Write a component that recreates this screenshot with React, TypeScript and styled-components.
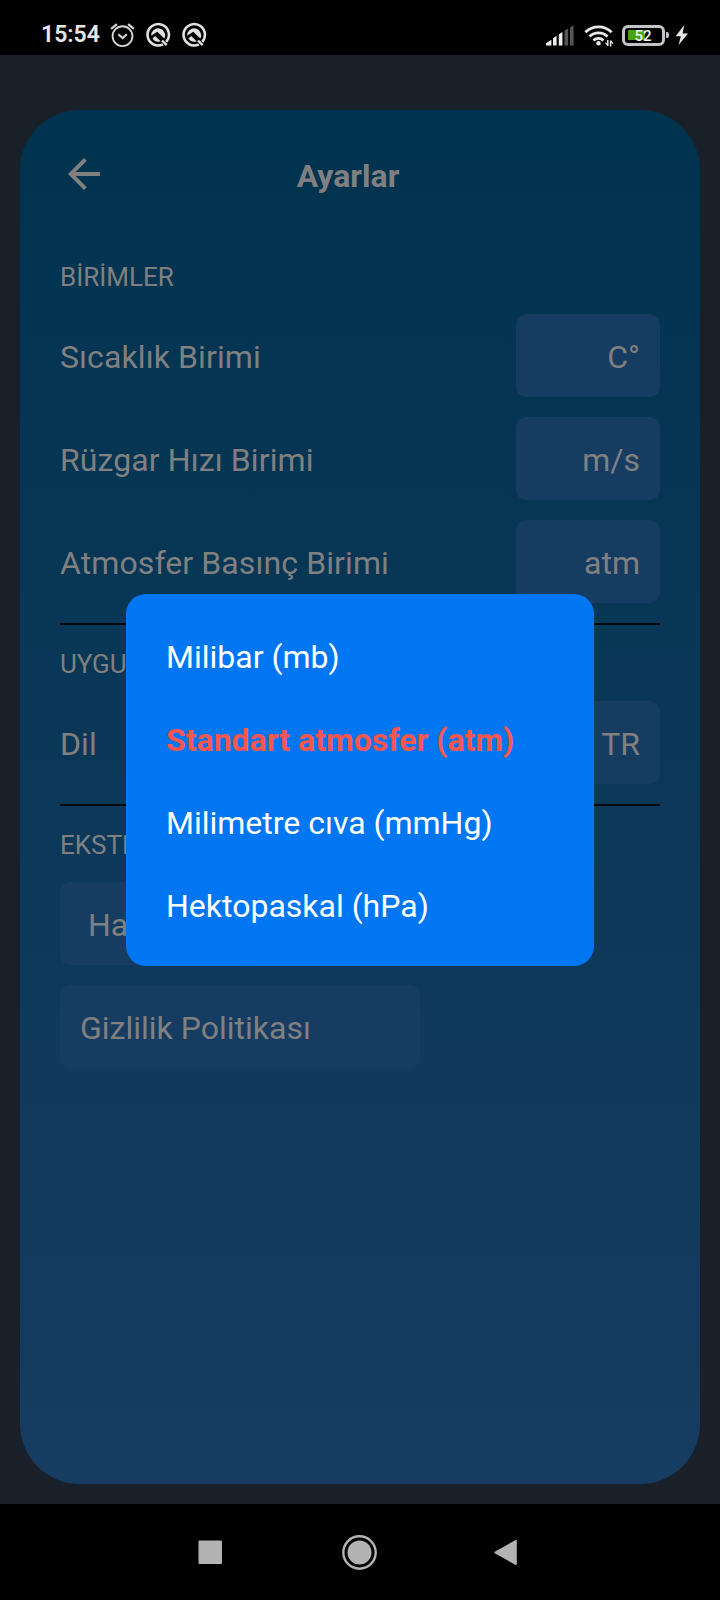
import React from 'react';
import styled, { createGlobalStyle } from 'styled-components';

const GlobalStyle = createGlobalStyle`
  * { box-sizing: border-box; }
  body { margin: 0; background: #000; }
`;

const Screen = styled.div`
  position: relative;
  width: 720px;
  height: 1600px;
  display: flex;
  flex-direction: column;
  background: #1a2029;
  font-family: Roboto, sans-serif;
  font-size: 32px;
  color: #808080;
  overflow: hidden;
`;

const StatusBar = styled.header`
  height: 55px;
  flex: none;
  display: flex;
  align-items: center;
  justify-content: space-between;
  padding: 15px 31px 0 41px;
  background: #000;
  color: #e6e6e6;
`;

const StatusGroup = styled.div`
  display: flex;
  align-items: center;
  gap: 10px;
  height: 40px;
`;

const Clock = styled.span`
  width: 58px;
  font-size: 23px;
  font-weight: 600;
  line-height: 40px;
  white-space: nowrap;
`;

const Glyph = styled.svg`
  display: block;
  flex: none;
`;

const Battery = styled.div`
  display: flex;
  align-items: center;
  margin: 0 -4px 0 -2px;
`;

const BatteryShell = styled.div`
  position: relative;
  width: 43px;
  height: 21px;
  border: 3px solid #c4c2c8;
  border-radius: 6px;
  padding: 2.5px;
`;

const BatteryFill = styled.div`
  width: 17px;
  height: 10px;
  border-radius: 1px;
  background: #46a314;
`;

const BatteryText = styled.span`
  position: absolute;
  inset: 0;
  padding-right: 1px;
  text-align: center;
  font-size: 15px;
  font-weight: 500;
  line-height: 17px;
  color: #f4f4f4;
`;

const BatteryTip = styled.div`
  width: 3px;
  height: 6px;
  margin-left: 1px;
  border-radius: 0 2px 2px 0;
  background: #c4c2c8;
`;

const Main = styled.main`
  flex: 1;
  padding: 55px 20px 20px;
`;

const Card = styled.section`
  height: 1374px;
  border-radius: 60px;
  background: linear-gradient(#00334f, #173c61);
  padding: 20px 40px 0;
`;

const TitleBar = styled.div`
  display: flex;
  align-items: center;
  height: 88px;
  margin-bottom: 20px;
`;

const Title = styled.h1`
  flex: 1;
  margin: 4px 72px 0 0;
  text-align: center;
  font-size: 32px;
  font-weight: 700;
  line-height: 43px;
`;

const SectionLabel = styled.h2`
  margin: 0;
  height: 66px;
  padding-top: 12px;
  font-size: 26px;
  font-weight: 400;
  line-height: 54px;
`;

const Row = styled.div`
  display: flex;
  align-items: center;
  justify-content: space-between;
  padding: 10px 0;
`;

const RowLabel = styled.span`
  padding-top: 2px;
  letter-spacing: 0.1px;
`;

const Field = styled.div<{ $wide?: boolean; $indent?: number }>`
  width: ${(p) => (p.$wide ? 360 : 144)}px;
  padding: 22px 20px 18px ${(p) => p.$indent ?? 20}px;
  border-radius: 10px;
  background: #173c61;
  line-height: 43px;
  text-align: ${(p) => (p.$wide ? 'left' : 'right')};
`;

const Divider = styled.hr`
  margin: 10px 0 0;
  height: 2px;
  border: 0;
  background: #04090e;
`;

const Modal = styled.ul`
  position: absolute;
  top: 594px;
  left: 126px;
  width: 468px;
  margin: 0;
  padding: 20px 40px;
  list-style: none;
  border-radius: 20px;
  background: #0076f3;
`;

const Option = styled.li<{ $selected?: boolean }>`
  padding: 22px 0 18px;
  line-height: 43px;
  color: ${(p) => (p.$selected ? '#f9564f' : '#fff')};
  font-weight: ${(p) => (p.$selected ? 700 : 400)};
`;

const NavBar = styled.nav`
  height: 96px;
  flex: none;
  display: flex;
  align-items: center;
  justify-content: center;
  gap: 108px;
  background: #000;
`;

const AlarmIcon = () => (
  <Glyph width="26" height="26" viewBox="0 0 26 26" fill="none" stroke="#d4d4d4" strokeWidth="1.9">
    <circle cx="13.5" cy="14.2" r="9.9" />
    <path d="M2.1 6.8 7.9 2.2M24.9 6.8 19.1 2.2" strokeWidth="2.3" />
    <path d="m9.3 12.2 4.3 3.9 4.3-3.9" strokeWidth="2.1" />
  </Glyph>
);

const QIcon = () => (
  <Glyph width="26" height="26" viewBox="0 0 26 26" fill="none">
    <path d="M17.9 22.4A10.7 10.7 0 1 1 21.3 19.8" stroke="#e2e2e2" strokeWidth="2.6" />
    <path d="M6.2 13.8A7 7 0 1 1 19.4 16.6L12.2 9.8Z" fill="#e2e2e2" />
    <path d="M7.5 16.5l2.6-2.6 5.6 5.4A7 7 0 0 1 7.5 16.5Z" fill="#e2e2e2" />
    <path d="M17 18.5l4.7 4.6" stroke="#e2e2e2" strokeWidth="2.4" />
  </Glyph>
);

const SignalIcon = () => (
  <Glyph width="28" height="21" viewBox="0 0 28 21">
    <path d="M0 20.5v-2.3l5.4-3.5v5.8zM7 13.2l3.6-2.4v9.7H7zM12.8 9.5l3.6-2.4v13.4h-3.6z" fill="#ededed" />
    <path d="M18.5 5.7l3.6-2.2v17h-3.6zM24 2.4l3.6-2.2v20.3H24z" fill="#555" />
  </Glyph>
);

const WifiIcon = () => (
  <Glyph width="30" height="23" viewBox="0 0 30 23" fill="none" stroke="#e8e8e8">
    <path d="M1.4 8.2a19 19 0 0 1 26.2 0M5.5 12.4a13 13 0 0 1 18 0M9.5 16.4a7.2 7.2 0 0 1 10 0" strokeWidth="2.8" />
    <circle cx="14.5" cy="19.2" r="2.2" fill="#e8e8e8" stroke="none" />
    <path d="M23.8 16v6M26.6 16.5v6" strokeWidth="1.5" />
    <path d="m21.4 18.6 2.2 2.6M26.8 17l2.2 2.6" strokeWidth="1.2" />
  </Glyph>
);

const BoltIcon = () => (
  <Glyph width="14" height="22" viewBox="0 0 14 22">
    <path d="M9.3 1 .6 12.2h5.2L3.6 21 13 9.4H7.6z" fill="#e8e8e8" />
  </Glyph>
);

const BackIcon = () => (
  <Glyph width="48" height="48" viewBox="0 0 24 24">
    <path d="M20 11H7.83l5.59-5.59L12 4l-8 8 8 8 1.41-1.41L7.83 13H20v-2z" fill="#808080" />
  </Glyph>
);

const units = [
  ['Sıcaklık Birimi', 'C°'],
  ['Rüzgar Hızı Birimi', 'm/s'],
  ['Atmosfer Basınç Birimi', 'atm'],
];

const options = [
  'Milibar (mb)',
  'Standart atmosfer (atm)',
  'Milimetre cıva (mmHg)',
  'Hektopaskal (hPa)',
];

export default function App() {
  return (
    <Screen>
      <GlobalStyle />
      <StatusBar>
        <StatusGroup>
          <Clock>15:54</Clock>
          <AlarmIcon />
          <QIcon />
          <QIcon />
        </StatusGroup>
        <StatusGroup>
          <SignalIcon />
          <WifiIcon />
          <Battery>
            <BatteryShell>
              <BatteryFill />
              <BatteryText>52</BatteryText>
            </BatteryShell>
            <BatteryTip />
          </Battery>
          <BoltIcon />
        </StatusGroup>
      </StatusBar>

      <Main>
        <Card>
          <TitleBar>
            <BackIcon />
            <Title>Ayarlar</Title>
          </TitleBar>

          <SectionLabel>BİRİMLER</SectionLabel>
          {units.map(([label, value]) => (
            <Row key={label}>
              <RowLabel>{label}</RowLabel>
              <Field>{value}</Field>
            </Row>
          ))}
          <Divider />

          <SectionLabel>UYGULAMA</SectionLabel>
          <Row>
            <RowLabel>Dil</RowLabel>
            <Field>TR</Field>
          </Row>
          <Divider />

          <SectionLabel>EKSTRA</SectionLabel>
          <Row>
            <Field $wide $indent={28}>Hata Bildir</Field>
          </Row>
          <Row>
            <Field $wide>Gizlilik Politikası</Field>
          </Row>
        </Card>
      </Main>

      <NavBar>
        <Glyph width="36" height="36" viewBox="0 0 36 36">
          <rect x="0.5" y="6.5" width="23.5" height="23.5" rx="1" fill="#b3b3b3" />
        </Glyph>
        <Glyph width="36" height="36" viewBox="0 0 36 36">
          <circle cx="17.5" cy="18.5" r="16.2" fill="none" stroke="#b3b3b3" strokeWidth="2.4" />
          <circle cx="17.5" cy="18.5" r="12" fill="#b3b3b3" />
        </Glyph>
        <Glyph width="36" height="36" viewBox="0 0 36 36">
          <path d="M9.2 18.5 30 6.7v23.6z" fill="#b3b3b3" stroke="#b3b3b3" strokeWidth="1.6" strokeLinejoin="round" />
        </Glyph>
      </NavBar>

      <Modal>
        {options.map((name, i) => (
          <Option key={name} $selected={i === 1}>
            {name}
          </Option>
        ))}
      </Modal>
    </Screen>
  );
}
